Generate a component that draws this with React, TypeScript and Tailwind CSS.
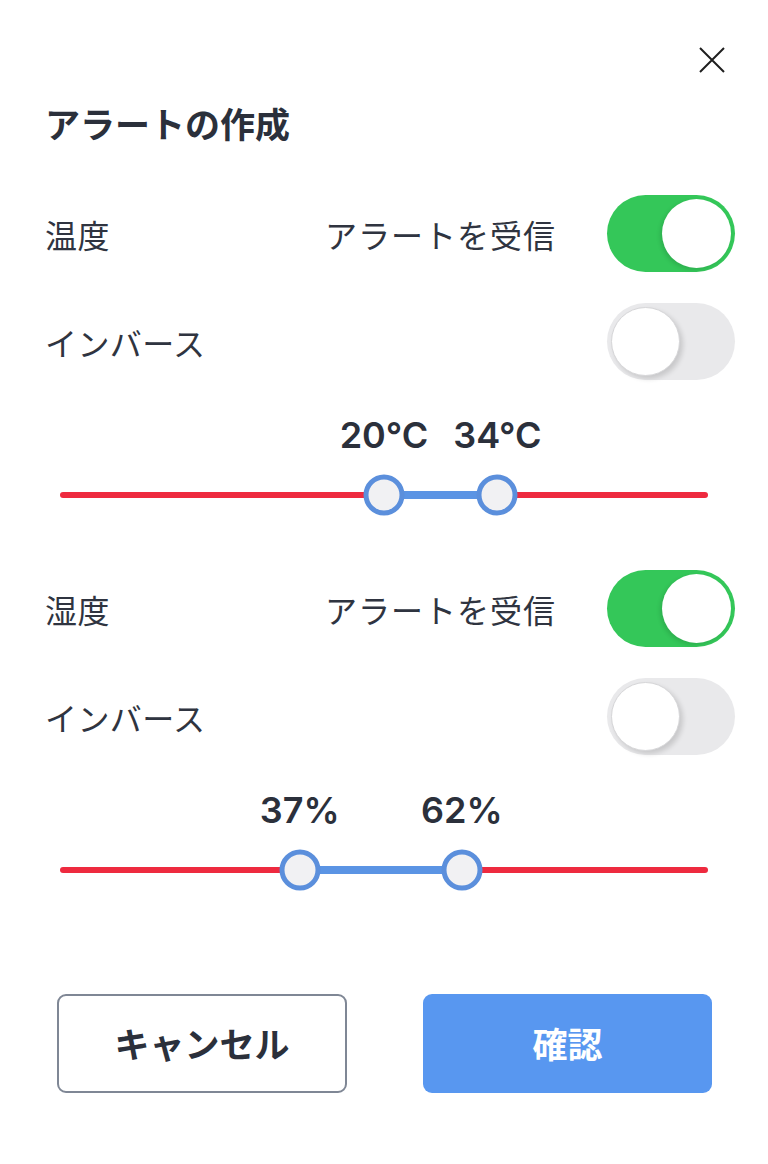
import React from "react";

const jp = "font-['Hiragino_Sans','Noto_Sans_CJK_JP',sans-serif]";

function Toggle({ on }: { on: boolean }) {
  return on ? (
    <div className="relative w-[128px] h-[77px] rounded-full bg-[#34c759] shrink-0">
      <div className="absolute right-[4px] top-[4px] w-[69px] h-[69px] rounded-full bg-white shadow-[-2px_2px_4px_rgba(0,0,0,0.12)]" />
    </div>
  ) : (
    <div className="relative w-[128px] h-[77px] rounded-full bg-[#e9e9eb] shrink-0">
      <div className="absolute left-[4px] top-[4px] w-[69px] h-[69px] rounded-full bg-white border border-[#d6d6d8] shadow-[3px_3px_5px_rgba(0,0,0,0.14)]" />
    </div>
  );
}

function RangeSlider({
  lo,
  hi,
  min,
  max,
  fmt,
}: {
  lo: number;
  hi: number;
  min: number;
  max: number;
  fmt: (v: number) => string;
}) {
  const p1 = ((lo - min) / (max - min)) * 100;
  const p2 = ((hi - min) / (max - min)) * 100;
  return (
    <div className="mx-[60px] mt-[35px]">
      <div className="relative h-[40px]">
        {[{ p: p1, v: lo }, { p: p2, v: hi }].map((t, i) => (
          <div
            key={i}
            className="absolute top-0 h-[40px] -translate-x-1/2 flex items-center whitespace-nowrap text-[36px] font-semibold text-[#2b303b] font-['Inter',sans-serif]"
            style={{ left: `${t.p}%` }}
          >
            {fmt(t.v)}
          </div>
        ))}
      </div>
      <div className="relative h-[40px] mt-[20px] flex items-center">
        <div className="w-full h-[6px] rounded-full bg-[#ee2a3f]" />
        <div
          className="absolute h-[8px] bg-[#5b94e4] top-1/2 -translate-y-1/2"
          style={{ left: `${p1}%`, width: `${p2 - p1}%` }}
        />
        {[p1, p2].map((p, i) => (
          <div
            key={i}
            className="absolute top-1/2 -translate-x-1/2 -translate-y-1/2 w-[41px] h-[41px] rounded-full bg-[#f1f1f3] border-[5px] border-[#5b8fdc]"
            style={{ left: `${p}%` }}
          />
        ))}
      </div>
    </div>
  );
}

function Section({
  label,
  lo,
  hi,
  min,
  max,
  fmt,
}: {
  label: string;
  lo: number;
  hi: number;
  min: number;
  max: number;
  fmt: (v: number) => string;
}) {
  return (
    <div>
      <div className="flex items-center pl-[45px] pr-[33px] h-[77px]">
        <div className={`flex-1 text-[32px] tracking-[0.4px] text-[#2f3440] ${jp}`}>{label}</div>
        <div className={`text-[32px] text-[#2f3440] mr-[51px] tracking-[1px] ${jp}`}>アラートを受信</div>
        <Toggle on />
      </div>
      <div className="flex items-center pl-[45px] pr-[33px] h-[77px] mt-[31px]">
        <div className={`flex-1 text-[32px] tracking-[0.4px] text-[#2f3440] ${jp}`}>インバース</div>
        <Toggle on={false} />
      </div>
      <RangeSlider lo={lo} hi={hi} min={min} max={max} fmt={fmt} />
    </div>
  );
}

export default function App() {
  return (
    <div className={`w-[768px] h-[1164px] bg-white ${jp}`}>
      <div className="h-[96px] pt-[47px] pr-[43px] flex justify-end items-start">
        <svg width="26" height="26" viewBox="0 0 26 26" fill="none">
          <path d="M1 1L25 25M25 1L1 25" stroke="#1f1f1f" strokeWidth="2" />
        </svg>
      </div>
      <div className="h-[52px] flex items-center pl-[45px]">
        <div className={`text-[35px] font-bold text-[#2b303b] leading-none ${jp}`}>アラートの作成</div>
      </div>
      <div className="mt-[47px]">
        <Section label="温度" lo={20} hi={34} min={-20} max={60} fmt={(v) => `${v}°C`} />
      </div>
      <div className="mt-[55px]">
        <Section label="湿度" lo={37} hi={62} min={0} max={100} fmt={(v) => `${v}%`} />
      </div>
      <div className="mt-[104px] flex pl-[57px] pr-[56px] justify-between">
        <button className={`w-[290px] h-[99px] rounded-[9px] border-2 border-[#7f8795] bg-white text-[35px] font-bold text-[#2b303b] ${jp}`}>
          キャンセル
        </button>
        <button className={`w-[289px] h-[99px] rounded-[9px] bg-[#5897f0] text-[35px] font-bold text-white ${jp}`}>
          確認
        </button>
      </div>
    </div>
  );
}
